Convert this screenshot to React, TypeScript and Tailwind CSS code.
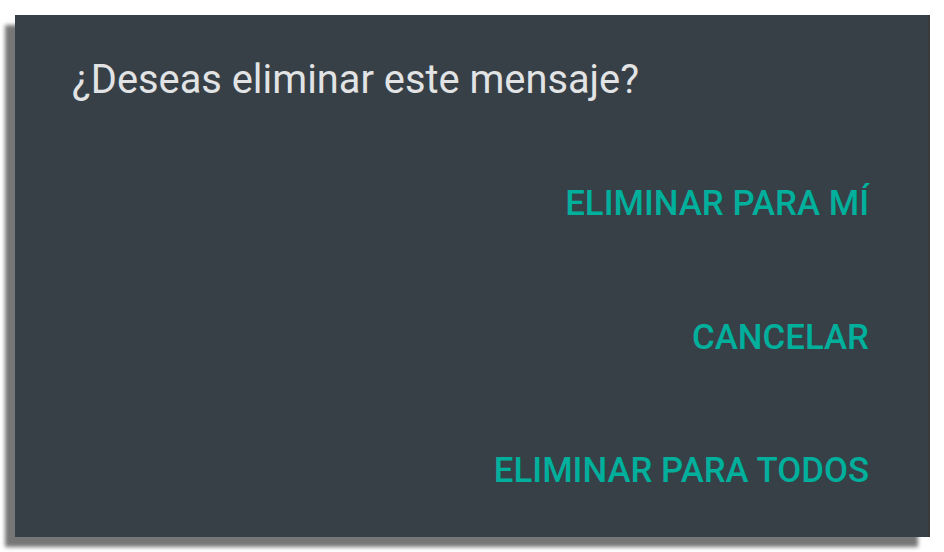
import React from "react";

export default function App() {
  return (
    <div className="w-[944px] h-[552px] bg-white relative overflow-hidden" style={{ fontFamily: "Roboto, 'Noto Sans', sans-serif" }}>
      <div className="absolute left-[15px] top-[15px] w-[913px] h-[522px] bg-[#374047] shadow-[-10px_10px_4px_#777777] flex flex-col pt-[42px] pl-[57px] pr-[59px]">
        <div className="text-[39.8px] leading-[46px] text-[#e2e3e4] font-normal">¿Deseas eliminar este mensaje?</div>
        <div className="flex flex-col items-end mt-[80px] gap-[94px]">
          <div className="text-[34.8px] leading-[40px] font-medium text-[#00af9c]">ELIMINAR PARA MÍ</div>
          <div className="text-[34.8px] leading-[40px] font-medium text-[#00af9c]">CANCELAR</div>
          <div className="text-[34.8px] leading-[40px] font-medium text-[#00af9c] -mt-[1px]">ELIMINAR PARA TODOS</div>
        </div>
      </div>
      <div className="absolute left-[928px] top-[15px] w-[2px] h-[522px] bg-[#3a3a3c]" />
    </div>
  );
}
